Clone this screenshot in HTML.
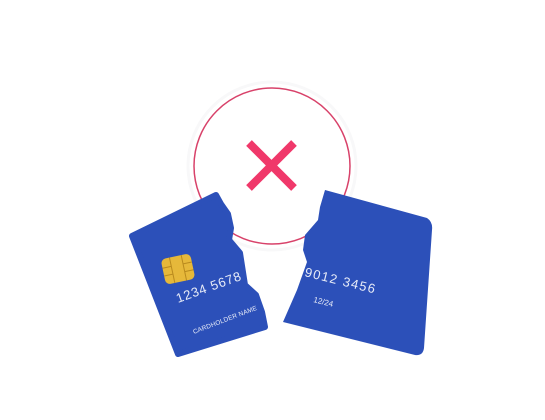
<!DOCTYPE html>
<html><head><style>
html,body{margin:0;padding:0;background:#fff;width:545px;height:420px;overflow:hidden}
svg{display:block}
text{font-family:"Liberation Sans",sans-serif;fill:#e8ecf8}
</style></head><body>
<svg width="545" height="420" viewBox="0 0 545 420">
<circle cx="272" cy="166" r="84" fill="none" stroke="#f8f8f9" stroke-width="3"/>
<circle cx="272" cy="166" r="78" fill="#fff" stroke="#d8426a" stroke-width="1.5"/>
<g stroke="#f0386a" stroke-width="8" stroke-linecap="butt">
<line x1="249" y1="143" x2="294" y2="188"/>
<line x1="294" y1="143" x2="249" y2="188"/>
</g>
<path fill="#2c50b9" stroke="#2c50b9" stroke-width="6" stroke-linejoin="round" d="M132,236 L216,195 L221,204 L228,214 L231,228 L229,240 L240,253 L245,285 L256,295 L262,312 L265,327 L178,354 Z"/>
<path fill="#2c50b9" d="M325,190 L427,218 Q433,222 432,230 L424,348 Q423,356 415,355 L283,322 L297,290 L307,262 L303,250 L305,235 L318,220 L320,207 Z"/>
<rect x="163" y="256" width="30" height="26" rx="5" fill="#e6b83a" transform="rotate(-12 178 269)"/>
<g stroke="#b98a1e" stroke-width="1" fill="none" transform="rotate(-12 178 269)">
<path d="M163,265 h9 v8 h-9 M193,265 h-9 v8 h9 M172,256 v9 M184,256 v9 M172,273 v9 M184,273 v9"/>
</g>
<text x="178" y="303" font-size="13" transform="rotate(-20 178 303)" textLength="68">1234 5678</text>
<text x="194" y="334" font-size="6.5" transform="rotate(-21 194 334)" textLength="68">CARDHOLDER NAME</text>
<text x="304" y="276" font-size="13" transform="rotate(14 304 276)" textLength="72">9012 3456</text>
<text x="313" y="302" font-size="8" transform="rotate(14 313 302)">12/24</text>
</svg>
</body></html>
